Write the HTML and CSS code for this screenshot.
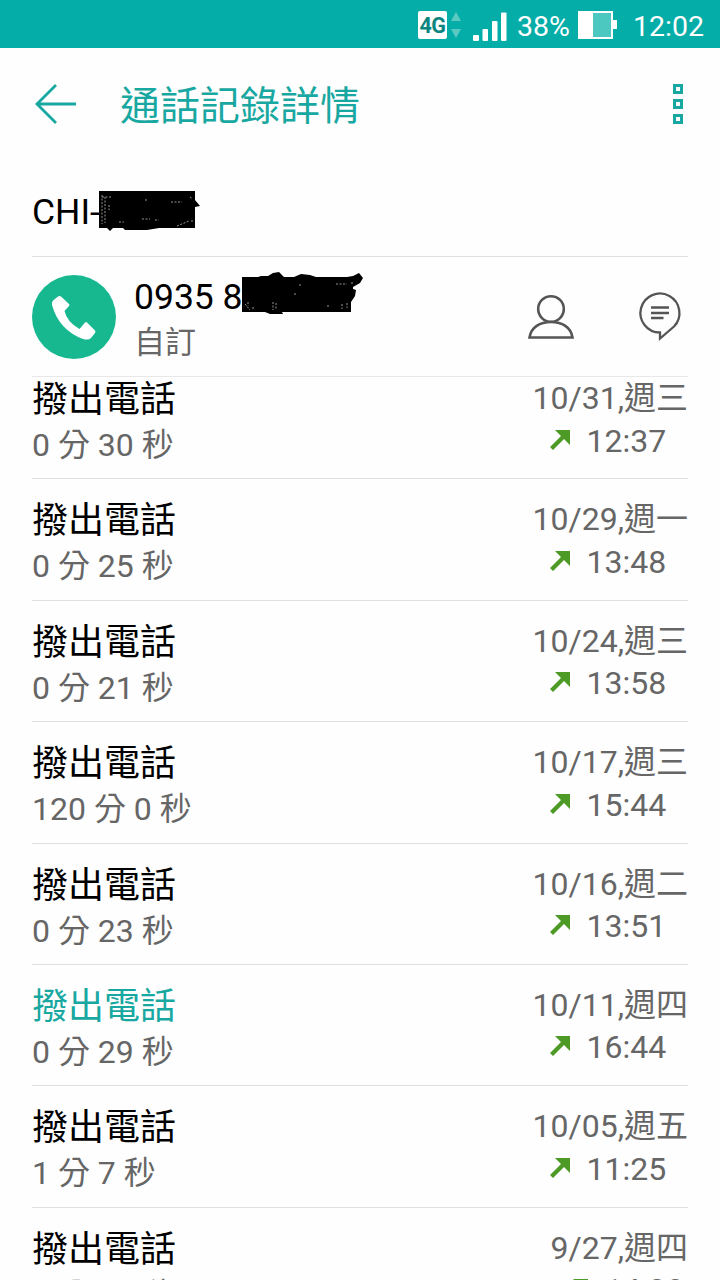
FILE: index.html
```html
<!DOCTYPE html>
<html lang="zh-Hant">
<head>
<meta charset="utf-8">
<title>通話記錄詳情</title>
<link rel="stylesheet" href="styles.css">
</head>
<body>
<div class="statusbar">
  <span class="net">4G</span>
  <svg class="updown" width="10" height="26" viewBox="0 0 10 26"><path d="M0 9 5 0l5 9zM0 17h10l-5 9z"/></svg>
  <svg class="signal" width="34" height="30" viewBox="0 0 34 30"><rect x="0" y="24" width="6" height="6" rx="1"/><rect x="9.500" y="18" width="5.500" height="12" rx="1"/><rect x="19" y="10" width="5.500" height="20" rx="1"/><rect x="28" y="1.500" width="5.500" height="28.500" rx="1"/></svg>
  <span class="percent">38%</span>
  <svg class="battery" width="39" height="28" viewBox="0 0 39 28"><path d="M0 0h35v9h4v9h-4v10H0z" fill="#fff"/><path d="M15 2h18v24H15z" fill="#4dc8c0"/></svg>
  <span class="clock">12:02</span>
</div>
<header class="toolbar">
  <svg class="back" width="42" height="42" viewBox="0 0 42 42"><path d="M41 21H3M21 2 2 21l19 19"/></svg>
  <h1 class="heading">通話記錄詳情</h1>
  <div class="more"><i class="dot"></i><i class="dot"></i><i class="dot"></i></div>
</header>
<section class="name">
  <span>CHI-</span>
  <svg class="mask-name" width="102" height="42" viewBox="0 0 102 42"><path d="M0 1h96v9l5 6-5 1v21H60l-12 2H26l-2-2H14l-3 3-3-3H0z"/><path class="specks" d="M3 5v29M6 7v26M10 15v5M3 7h10M20 32h5M43 29h8M56 30h4M72 12h11M78 36l12-5M91 7l3 2M93 30v3M47 9v2"/></svg>
</section>
<section class="contact">
  <svg class="call" width="84" height="84" viewBox="0 0 84 84"><circle cx="42" cy="42" r="42" fill="#17b890"/><path d="M26 21.500q1.500-1.200 3 0l8 7.500q1 1 0 2l-4.500 5Q35 47 47.500 54l5.500-6.500q1-1 2 0l8 8q1 1 0 2.500l-4 5q-2.500 2.500-8 1Q27 55 20 30q-.5-3 1-4.500z" fill="#fff"/></svg>
  <div class="number">
    <div class="digits"><span>0935 8</span><svg class="mask-number" width="122" height="46" viewBox="0 0 122 46"><path d="M1 6h16l3-1h7l5-3 6-1 5 5h10l7-3 9 1 6 2h31l6-1 6-3 4 5-3 5-7 4v2l3 1-1 6-4 6v10H41l1 2H29l-5-2H1z"/><path class="specks" d="M4 33l5 6M7 31v4M12 36v3M32 31v8M35 32v6M53 23h3M58 14h3M87 34v3M95 13h11M110 12h3M101 33v5M106 32v5"/></svg></div>
    <div class="label">自訂</div>
  </div>
  <svg class="person" width="46" height="46" viewBox="0 0 46 46"><circle cx="23" cy="15" r="12.8"/><path d="M1.5 43.5C3 33 12 28 23 28s20 5 21.500 15.500z"/></svg>
  <svg class="message" width="42" height="50" viewBox="0 0 42 50"><path d="M21 46.500V40.500A19.500 19.500 0 1 1 35 34.500zM12 15.500h18M12 21h18M12 26h12.500"/></svg>
</section>
<main class="list">
  <article class="row"><div><div class="kind">撥出電話</div><div class="length">0 分 30 秒</div></div><div class="when"><div class="date">10/31,週三</div><div class="time"><svg class="arrow" viewBox="0 0 20 20"><path d="M5 0h15v15l-6-6L3 20 0 17 11 6z"/></svg>12:37</div></div></article>
  <article class="row"><div><div class="kind">撥出電話</div><div class="length">0 分 25 秒</div></div><div class="when"><div class="date">10/29,週一</div><div class="time"><svg class="arrow" viewBox="0 0 20 20"><path d="M5 0h15v15l-6-6L3 20 0 17 11 6z"/></svg>13:48</div></div></article>
  <article class="row"><div><div class="kind">撥出電話</div><div class="length">0 分 21 秒</div></div><div class="when"><div class="date">10/24,週三</div><div class="time"><svg class="arrow" viewBox="0 0 20 20"><path d="M5 0h15v15l-6-6L3 20 0 17 11 6z"/></svg>13:58</div></div></article>
  <article class="row"><div><div class="kind">撥出電話</div><div class="length">120 分 0 秒</div></div><div class="when"><div class="date">10/17,週三</div><div class="time"><svg class="arrow" viewBox="0 0 20 20"><path d="M5 0h15v15l-6-6L3 20 0 17 11 6z"/></svg>15:44</div></div></article>
  <article class="row"><div><div class="kind">撥出電話</div><div class="length">0 分 23 秒</div></div><div class="when"><div class="date">10/16,週二</div><div class="time"><svg class="arrow" viewBox="0 0 20 20"><path d="M5 0h15v15l-6-6L3 20 0 17 11 6z"/></svg>13:51</div></div></article>
  <article class="row"><div><div class="kind current">撥出電話</div><div class="length">0 分 29 秒</div></div><div class="when"><div class="date">10/11,週四</div><div class="time"><svg class="arrow" viewBox="0 0 20 20"><path d="M5 0h15v15l-6-6L3 20 0 17 11 6z"/></svg>16:44</div></div></article>
  <article class="row"><div><div class="kind">撥出電話</div><div class="length">1 分 7 秒</div></div><div class="when"><div class="date">10/05,週五</div><div class="time"><svg class="arrow" viewBox="0 0 20 20"><path d="M5 0h15v15l-6-6L3 20 0 17 11 6z"/></svg>11:25</div></div></article>
  <article class="row"><div><div class="kind">撥出電話</div><div class="length">0 分 20 秒</div></div><div class="when"><div class="date">9/27,週四</div><div class="time"><svg class="arrow" viewBox="0 0 20 20"><path d="M5 0h15v15l-6-6L3 20 0 17 11 6z"/></svg>14:38</div></div></article>
</main>
</body>
</html>
```

FILE: styles.css
```css
* { box-sizing: border-box; }
body {
  margin: 0;
  height: 1280px;
  overflow: hidden;
  display: flex;
  flex-direction: column;
  background: #fefefe;
  color: #000;
  font-family: Roboto, "Noto Sans CJK TC", sans-serif;
}
svg { display: block; flex: none; overflow: visible; }
.statusbar {
  flex: none;
  height: 48px;
  padding: 4px 16px 0 418px;
  display: flex;
  align-items: center;
  background: #04ada7;
  color: #fff;
  font-size: 28.5px;
  white-space: nowrap;
}
.net {
  width: 29px;
  height: 28px;
  margin-top: -3px;
  border-radius: 2px;
  background: #fff;
  color: #0b8580;
  font-size: 21.5px;
  font-weight: 700;
  letter-spacing: -.5px;
  line-height: 29px;
  text-align: center;
}
.updown { margin: -3px 0 0 4px; fill: #5bc9c3; }
.signal { margin-left: 12px; fill: #fff; }
.percent { width: 60px; margin-left: 10px; }
.battery { margin: -3px 0 0 1px; }
.clock { margin-left: 16px; }
.toolbar {
  flex: none;
  height: 112px;
  padding: 0 36px 0 35px;
  display: flex;
  align-items: center;
}
.back { fill: none; stroke: #18a8a1; stroke-width: 2.8; }
.heading {
  flex: 1;
  margin: 0 0 0 43px;
  padding-top: 5px;
  color: #18a8a1;
  font-size: 40px;
  font-weight: 400;
  line-height: 60px;
}
.more { display: flex; flex-direction: column; gap: 5px; margin-right: 1px; }
.dot { width: 10px; height: 10px; border: 2.5px solid #18a8a1; border-width: 3px; }
.name {
  flex: none;
  height: 97px;
  margin: 0 32px;
  padding-top: 30px;
  display: flex;
  border-bottom: 1px solid #e0e0e0;
  font-size: 35.5px;
  line-height: 44px;
}
.mask-name { margin-left: -1px; }
.specks { fill: none; stroke: #b8b8b8; stroke-width: .8; stroke-dasharray: 2 1.5; }
.contact {
  flex: none;
  height: 120px;
  margin: 0 32px;
  display: flex;
  align-items: center;
  border-bottom: 1px solid #e8e8e8;
}
.number { flex: 1; margin-left: 18px; padding-top: 7px; }
.digits { display: flex; height: 45px; font-size: 35.5px; line-height: 44px; white-space: nowrap; }
.mask-number { margin-top: -4px; margin-left: -2px; }
.label { height: 46px; color: #666; font-size: 31px; line-height: 46px; }
.person { margin-right: 65px; fill: none; stroke: #555; stroke-width: 2.6; }
.message { margin-right: 7px; fill: none; stroke: #555; stroke-width: 2.3; }
.list { flex: 1; margin: 0 32px; overflow: hidden; }
.row {
  height: 121.4px;
  padding-top: 19px;
  display: flex;
  justify-content: space-between;
  border-bottom: 1px solid #e0e0e0;
}
.row:first-child { height: 102.4px; padding-top: 0; }
.kind { height: 43px; padding-top: 3px; font-size: 36px; line-height: 40px; }
.current { color: #18a8a1; }
.length { height: 50px; color: #666; font-size: 32px; line-height: 50px; }
.when { color: #666; font-size: 32px; }
.date { height: 42px; line-height: 42px; }
.time { height: 44px; padding-left: 17px; display: flex; align-items: center; line-height: 45px; }
.arrow { width: 20px; height: 20px; margin: -3px 17px 0 0; fill: #4d9b26; }
```
